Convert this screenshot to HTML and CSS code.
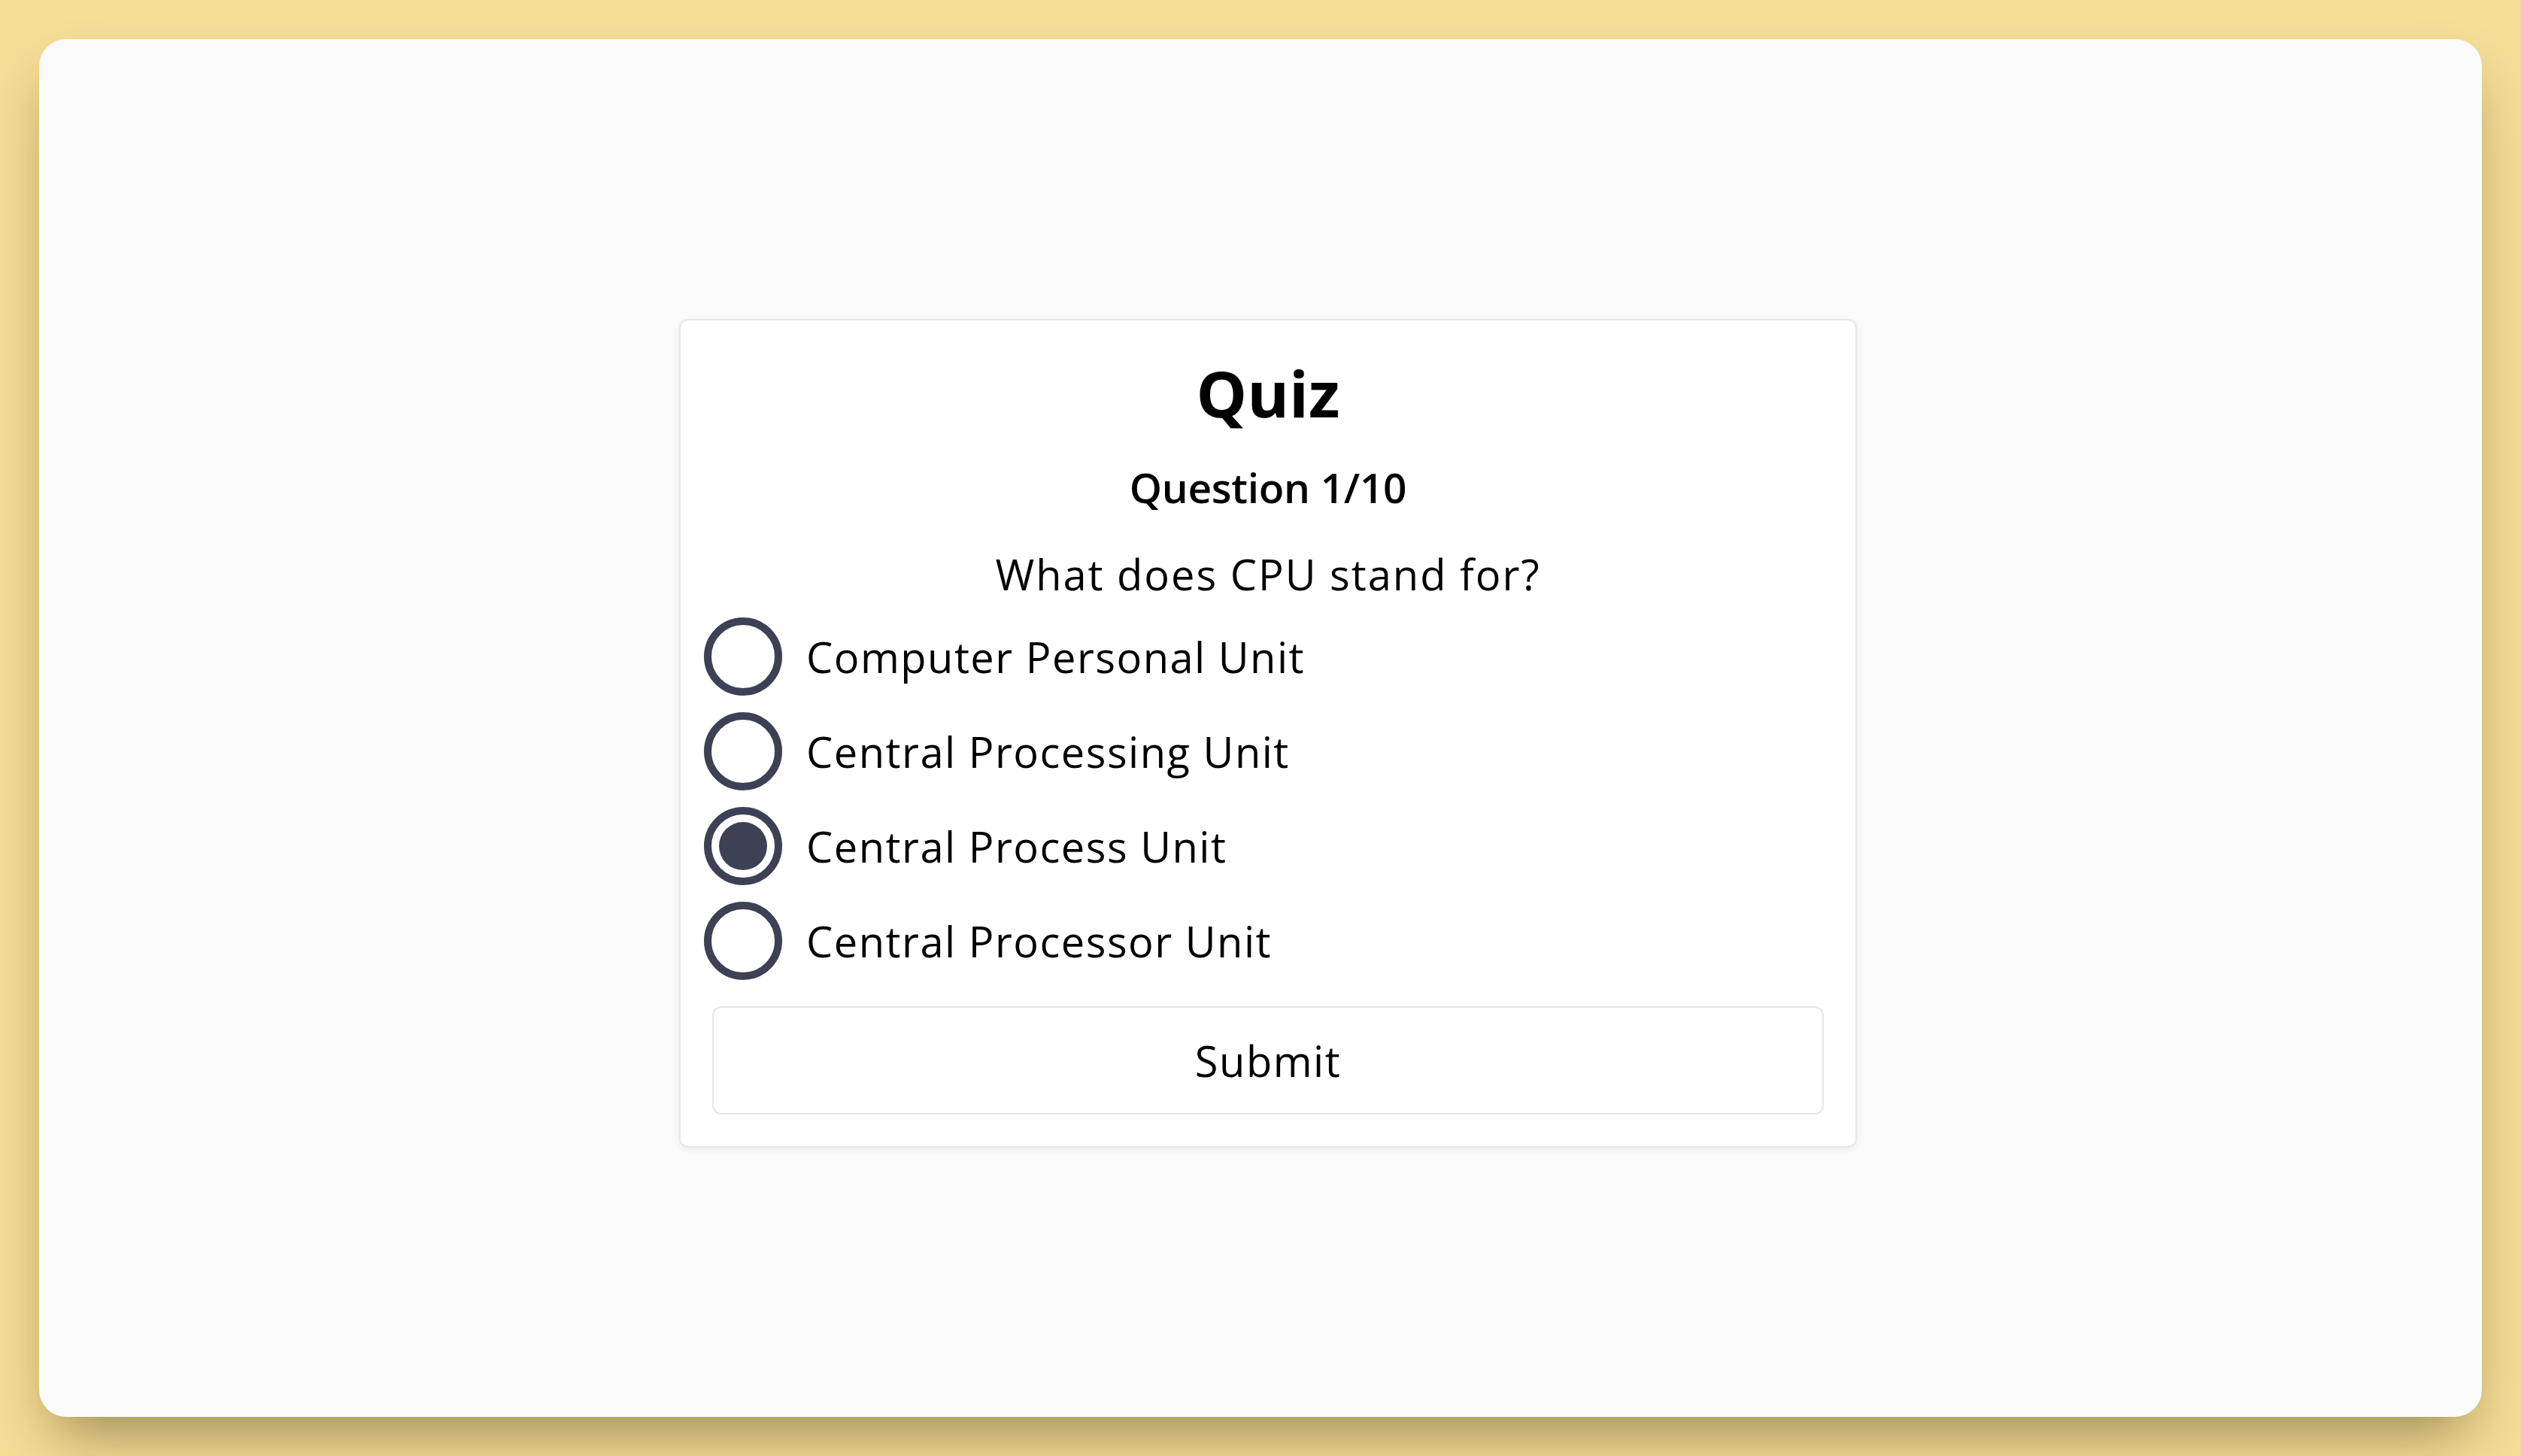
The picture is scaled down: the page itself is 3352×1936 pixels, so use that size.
FILE: index.html
```html
<!DOCTYPE html>
<html lang="en">
<head>
<meta charset="utf-8">
<title>Quiz</title>
<link rel="stylesheet" href="styles.css">
</head>
<body>
<main class="frame">
  <section class="card">
    <h1 class="title">Quiz</h1>
    <p class="progress">Question 1/10</p>
    <p class="question">What does CPU stand for?</p>
    <ul class="options">
      <li class="option"><span class="radio"></span><span class="label">Computer Personal Unit</span></li>
      <li class="option"><span class="radio"></span><span class="label">Central Processing Unit</span></li>
      <li class="option"><span class="radio checked"></span><span class="label">Central Process Unit</span></li>
      <li class="option"><span class="radio"></span><span class="label">Central Processor Unit</span></li>
    </ul>
    <button class="submit" type="button">Submit</button>
  </section>
</main>
</body>
</html>
```
FILE: styles.css
```css
* { box-sizing: border-box; }
html, body { margin: 0; padding: 0; }
body {
  width: 3352px;
  height: 1936px;
  background: #f5de96;
  padding: 52px;
  font-family: "Open Sans", "Noto Sans", sans-serif;
  color: #000;
}
.frame {
  height: 100%;
  background: #fafafa;
  border-radius: 36px;
  box-shadow: 0 40px 80px -20px rgba(40, 30, 0, 0.45);
  display: flex;
  align-items: center;
  justify-content: center;
  padding: 13px 0 0 20px;
}
.card {
  width: 1566px;
  background: #fff;
  border: 2px solid #e5e7eb;
  border-radius: 12px;
  box-shadow: 0 3px 8px rgba(0, 0, 0, 0.06);
  padding: 42px;
  display: flex;
  flex-direction: column;
  align-items: stretch;
}
.title {
  margin: 0;
  text-align: center;
  font-size: 85px;
  font-weight: 700;
  line-height: 108px;
}
.progress {
  margin: 30px 0 0;
  text-align: center;
  font-size: 55px;
  font-weight: 600;
  line-height: 84px;
  letter-spacing: -0.3px;
}
.question {
  margin: 31px 0 0;
  text-align: center;
  font-size: 56px;
  font-weight: 400;
  line-height: 84px;
  letter-spacing: 2px;
}
.options {
  list-style: none;
  margin: 16px 0 0 -11px;
  padding: 0;
  display: flex;
  flex-direction: column;
  gap: 22px;
}
.option {
  display: flex;
  align-items: center;
  gap: 32px;
  height: 104px;
}
.radio {
  width: 104px;
  height: 104px;
  flex: none;
  border: 10px solid #3d4153;
  border-radius: 50%;
  background: #fff;
  display: flex;
  align-items: center;
  justify-content: center;
}
.radio.checked::after {
  content: "";
  width: 64px;
  height: 64px;
  border-radius: 50%;
  background: #3d4153;
}
.label {
  font-size: 56px;
  line-height: 84px;
  letter-spacing: 1.5px;
}
.submit {
  margin-top: 35px;
  height: 144px;
  width: 100%;
  background: #fff;
  border: 2px solid #e5e7eb;
  border-radius: 12px;
  font-family: inherit;
  font-size: 56px;
  letter-spacing: 1.5px;
  color: #000;
  cursor: pointer;
}
```
